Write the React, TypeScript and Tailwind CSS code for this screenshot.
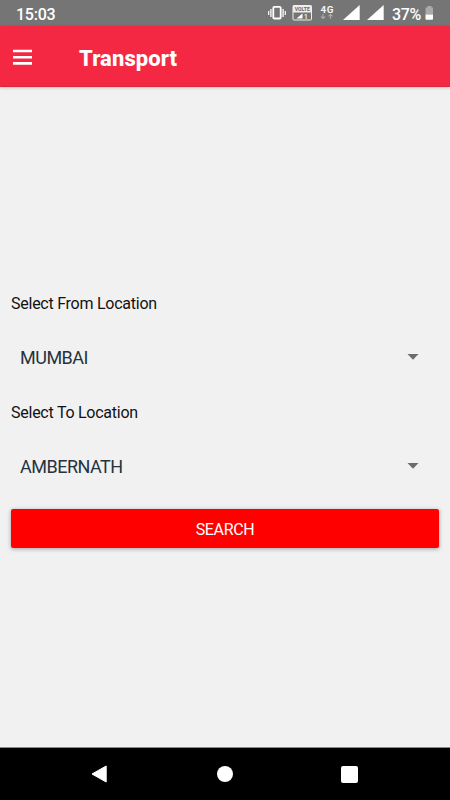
interface LocationSelectProps {
  label: string;
  value: string;
}

function StatusBar() {
  return (
    <div className="flex h-[26px] shrink-0 items-center bg-[#757575] pl-4 pr-[16px] text-white">
      <span className="pt-[3px] text-[16px] font-medium leading-6 tracking-[-0.25px]">15:03</span>
      <div className="ml-auto flex h-full items-center">
        {/* Vibrate */}
        <svg className="mr-[6px] h-[26px] w-[19px]" viewBox="0 0 19 26" fill="none" stroke="#fff">
          <rect x="6.3" y="6.9" width="7.4" height="11.6" rx="1" strokeWidth="1.8" />
          <path d="M3.9 9v8M16.1 9v8" strokeWidth="1.3" />
          <path d="M1.7 11v4M18.3 11v4" strokeWidth="1.2" />
        </svg>
        {/* VoLTE */}
        <svg className="mr-[8px] h-[26px] w-[20px] overflow-visible" viewBox="0 0 20 26">
          <rect x="1" y="5.5" width="18.5" height="14.5" rx="1" fill="none" stroke="#eee" />
          <rect x="1" y="5.5" width="18.5" height="7" fill="#eee" />
          <text x="2.8" y="11.4" textLength="15" lengthAdjust="spacingAndGlyphs" fontSize="6" fontWeight="700" fill="#666">VOLTE</text>
          <path d="M4.5 18.4h6v-5z" fill="#fff" />
          <text x="12" y="18.6" fontSize="6.5" fontWeight="500" fill="#fff">1</text>
        </svg>
        <svg className="mr-[9px] h-[26px] w-[14px] overflow-visible" viewBox="0 0 14 26">
          <text x="0.5" y="12.5" textLength="13" fontSize="9.8" fontWeight="700" fill="#f4f4f4">4G</text>
          <path d="M3 14v4.5M1 16.5l2 2 2-2M10.5 19v-4.5M8.5 16.4l2-2 2 2" fill="none" stroke="#aaa" strokeWidth="1.1" />
        </svg>
        <svg className="mr-[7px] h-[26px] w-[17px]" viewBox="0 0 17 26">
          <path d="M0 20L16.7 5v15z" fill="#fff" />
        </svg>
        <svg className="mr-[8px] h-[26px] w-[17px]" viewBox="0 0 17 26">
          <path d="M0 20L16.7 5v15z" fill="#fff" />
        </svg>
        <span className="w-[33px] whitespace-nowrap pt-[3px] text-[16px] font-medium leading-6 tracking-[-0.4px]">37%</span>
        <svg className="h-[26px] w-[9px]" viewBox="0 0 9 26">
          <path d="M2.5 6h4v1.5h1.5v7H.5v-7h2z" fill="#aaa" />
          <path d="M.5 14.5H8V19q0 .8-.8.8H1.3q-.8 0-.8-.8z" fill="#fff" />
        </svg>
      </div>
    </div>
  );
}

function LocationSelect({ label, value }: LocationSelectProps) {
  return (
    <div className="flex h-[108.7px] flex-col">
      <label className="h-[42px] pt-px text-[16px] leading-6 tracking-[-0.25px] text-[#111]">{label}</label>
      <button type="button" className="flex h-[48px] items-center justify-between pl-[9px] pr-[20px] text-[18px] tracking-[-0.5px] text-[#26323f]">
        <span className="pt-[1px]">{value}</span>
        <svg className="h-[6px] w-[12px]" viewBox="0 0 12 6">
          <path d="M.5 0h11L6 5.7z" fill="#6c6c6c" />
        </svg>
      </button>
    </div>
  );
}

export default function App() {
  return (
    <div className="flex h-[800px] w-[450px] flex-col overflow-hidden bg-[#f1f1f1] font-[Roboto,sans-serif]">
      <StatusBar />

      <header className="flex h-[61px] shrink-0 items-center border-b border-[#d72a40] bg-[#f42842] pl-[13px] shadow-[0_1px_3px_rgba(0,0,0,0.2)]">
        <button type="button" aria-label="Menu" className="pt-px">
          <svg className="h-[16px] w-[19px]" viewBox="0 0 19 16">
            <path d="M0 2h19M0 8.2h19M0 14.4h19" stroke="#fff" strokeWidth="2.6" />
          </svg>
        </button>
        <h1 className="ml-[47px] pt-[6px] text-[22px] font-extrabold leading-7 tracking-[0.1px] text-white">Transport</h1>
      </header>

      <main className="flex-1 px-[11px] pt-[204px]">
        <LocationSelect label="Select From Location" value="MUMBAI" />
        <LocationSelect label="Select To Location" value="AMBERNATH" />
        <button
          type="button"
          className="mt-[1px] flex h-[39px] w-[428px] items-center justify-center rounded-[2px] bg-[#ff0000] pt-[3px] text-[16px] tracking-[-0.35px] text-white shadow-[0_1px_4px_rgba(0,0,0,0.35)]"
        >
          SEARCH
        </button>
      </main>

      <nav className="flex h-[53px] shrink-0 items-center border-t border-[#8a8a8a] bg-black pl-[91px]">
        <svg className="h-[18px] w-[16px]" viewBox="0 0 16 18">
          <path d="M15.2 1v16L1 9z" fill="#fff" stroke="#fff" strokeLinejoin="round" />
        </svg>
        <div className="ml-[110px] size-[16px] rounded-full bg-white" />
        <div className="ml-[108px] size-[17px] rounded-[2px] bg-white" />
      </nav>
    </div>
  );
}
